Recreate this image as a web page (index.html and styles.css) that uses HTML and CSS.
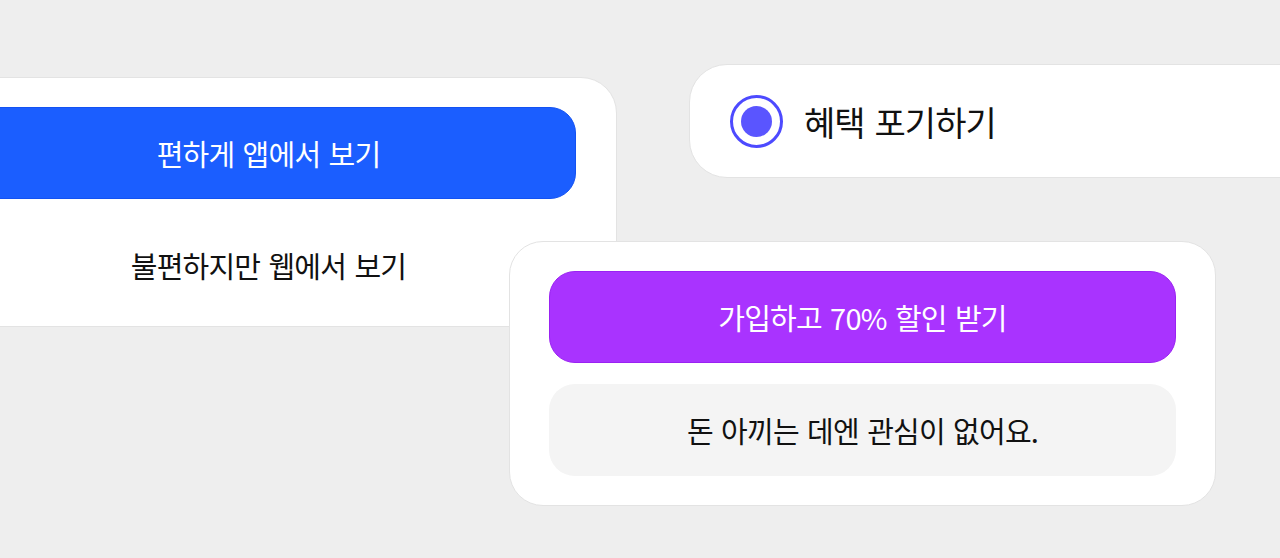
FILE: index.html
```html
<!DOCTYPE html>
<html lang="ko">
<head>
<meta charset="utf-8">
<title>Buttons</title>
<link rel="stylesheet" href="styles.css">
</head>
<body>
<main class="canvas">
  <section class="card card-app">
    <div class="btn btn-blue">편하게 앱에서 보기</div>
    <div class="btn btn-plain">불편하지만 웹에서 보기</div>
  </section>

  <section class="card card-option">
    <span class="radio"><span class="radio-dot"></span></span>
    <span class="option-label">혜택 포기하기</span>
  </section>

  <section class="card card-offer">
    <div class="btn btn-purple">가입하고 70% 할인 받기</div>
    <div class="btn btn-gray">돈 아끼는 데엔 관심이 없어요.</div>
  </section>
</main>
</body>
</html>
```

FILE: styles.css
```css
* { box-sizing: border-box; }

html, body {
  margin: 0;
  padding: 0;
}

body {
  background: #eeeeee;
  font-family: "Noto Sans CJK KR", "Noto Sans", sans-serif;
  color: #111111;
  overflow: hidden;
}

.canvas {
  position: relative;
  width: 1280px;
  height: 558px;
  overflow: hidden;
}

.card {
  position: absolute;
  background: #ffffff;
  border: 1px solid #e3e3e3;
  border-radius: 36px;
}

.card-app {
  left: -80px;
  top: 77px;
  width: 697px;
  padding: 29px 40px 15px 40px;
  display: flex;
  flex-direction: column;
  gap: 20px;
}

.card-option {
  left: 689px;
  top: 64px;
  width: 700px;
  height: 114px;
  padding-left: 40px;
  display: flex;
  align-items: center;
  gap: 21px;
  border-radius: 38px;
}

.card-offer {
  left: 509px;
  top: 241px;
  width: 707px;
  padding: 29px 39px;
  display: flex;
  flex-direction: column;
  gap: 21px;
  border-radius: 34px;
}

.btn {
  height: 92px;
  border-radius: 26px;
  display: flex;
  align-items: center;
  justify-content: center;
  font-size: 29px;
  letter-spacing: -0.8px;
  word-spacing: 1px;
  white-space: nowrap;
}

.btn-blue {
  background: #1b5eff;
  border: 1px solid #1352f2;
  color: #ffffff;
}

.btn-plain {
  background: #ffffff;
  color: #111111;
}

.btn-purple {
  background: #a933ff;
  border: 1px solid #9a22f2;
  color: #ffffff;
}

.btn-gray {
  background: #f4f4f4;
  color: #111111;
}

.radio {
  width: 53px;
  height: 53px;
  flex: 0 0 53px;
  border: 3px solid #4d4aff;
  border-radius: 50%;
  display: flex;
  align-items: center;
  justify-content: center;
}

.radio-dot {
  width: 31px;
  height: 31px;
  border-radius: 50%;
  background: #5a55ff;
}

.option-label {
  font-size: 34px;
  letter-spacing: -1px;
  word-spacing: 1.5px;
  color: #111111;
  white-space: nowrap;
}
```
